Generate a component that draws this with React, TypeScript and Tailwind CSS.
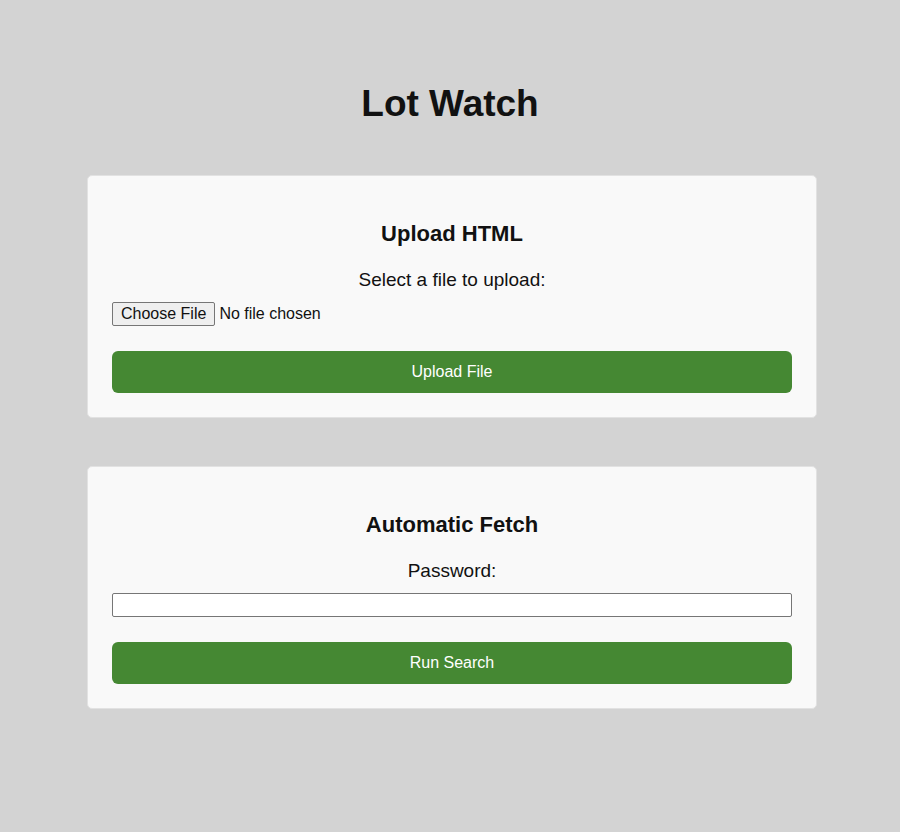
import React, { useState } from 'react';

const font = { fontFamily: '"Liberation Sans", Arial, sans-serif' };

interface CardProps {
  title: string;
  label: string;
  children: React.ReactNode;
  buttonText: string;
  onSubmit: () => void;
}

const Card: React.FC<CardProps> = ({ title, label, children, buttonText, onSubmit }) => {
  return (
    <div className="bg-[#f9f9f9] border border-[#e2e2e2] rounded-[5px] px-6 pt-6 pb-6">
      <h2 className="mt-[22px] text-[22px] leading-[24px] font-bold text-center text-[#111]">{title}</h2>
      <p className="mt-[23px] text-[19px] leading-[22px] text-center text-[#111]">{label}</p>
      <div className="mt-[11px]">{children}</div>
      <button
        type="button"
        onClick={onSubmit}
        className="mt-[25px] w-full h-[42px] rounded-[6px] bg-[#458833] text-white text-[16px]"
      >
        {buttonText}
      </button>
    </div>
  );
};

export default function App() {
  const [fileName, setFileName] = useState<string | null>(null);
  const [password, setPassword] = useState('');

  return (
    <div className="min-h-screen bg-[#d3d3d3] pt-[83px] pb-[123px]" style={font}>
      <h1 className="text-[37px] leading-[42px] font-bold text-center text-[#111]">Lot Watch</h1>

      <div className="ml-[87px] w-[730px] mt-[50px] flex flex-col gap-[48px]">
        <Card title="Upload HTML" label="Select a file to upload:" buttonText="Upload File" onSubmit={() => {}}>
          <label className="flex items-center h-[24px] cursor-pointer">
            <span className="h-[24px] flex items-center px-[8px] border border-[#767676] rounded-[2px] bg-[#efefef] text-[16px] text-[#111]">
              Choose File
            </span>
            <span className="ml-[4px] text-[16px] text-[#111]">{fileName ?? 'No file chosen'}</span>
            <input
              type="file"
              className="hidden"
              onChange={(e) => setFileName(e.target.files?.[0]?.name ?? null)}
            />
          </label>
        </Card>

        <Card title="Automatic Fetch" label="Password:" buttonText="Run Search" onSubmit={() => {}}>
          <input
            type="password"
            value={password}
            onChange={(e) => setPassword(e.target.value)}
            className="block w-full h-[24px] bg-white border border-[#767676] rounded-[2px] px-1 text-[16px]"
          />
        </Card>
      </div>
    </div>
  );
}
